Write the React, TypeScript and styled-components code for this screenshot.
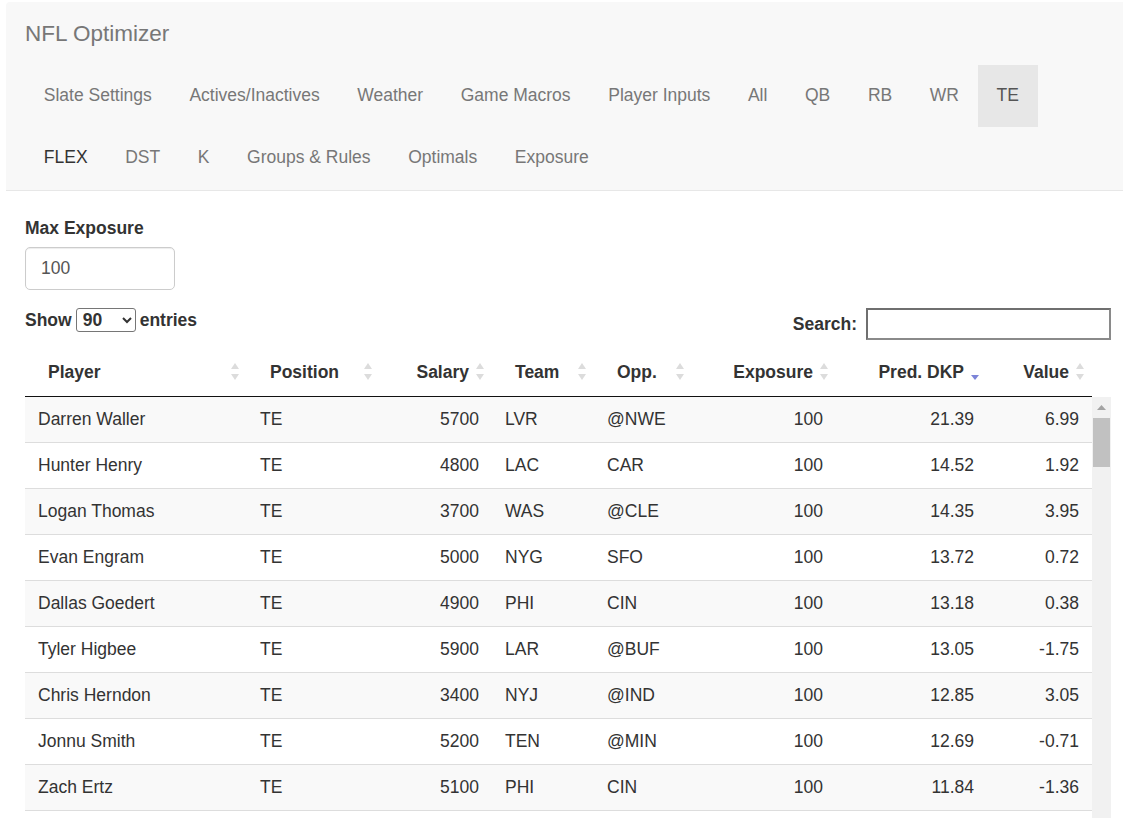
import React from "react";
import styled, { createGlobalStyle } from "styled-components";

const GlobalStyle = createGlobalStyle`
  html, body {
    margin: 0;
    padding: 0;
    overflow: hidden;
    background: #fff;
  }
  body {
    font-family: "Liberation Sans", Arial, Helvetica, sans-serif;
    font-size: 17.5px;
    line-height: 25px;
    color: #333;
  }
  * {
    box-sizing: border-box;
  }
`;

interface Row {
  player: string;
  pos: string;
  salary: number;
  team: string;
  opp: string;
  exposure: number;
  dkp: string;
  value: string;
}

const rows: Row[] = [
  { player: "Darren Waller", pos: "TE", salary: 5700, team: "LVR", opp: "@NWE", exposure: 100, dkp: "21.39", value: "6.99" },
  { player: "Hunter Henry", pos: "TE", salary: 4800, team: "LAC", opp: "CAR", exposure: 100, dkp: "14.52", value: "1.92" },
  { player: "Logan Thomas", pos: "TE", salary: 3700, team: "WAS", opp: "@CLE", exposure: 100, dkp: "14.35", value: "3.95" },
  { player: "Evan Engram", pos: "TE", salary: 5000, team: "NYG", opp: "SFO", exposure: 100, dkp: "13.72", value: "0.72" },
  { player: "Dallas Goedert", pos: "TE", salary: 4900, team: "PHI", opp: "CIN", exposure: 100, dkp: "13.18", value: "0.38" },
  { player: "Tyler Higbee", pos: "TE", salary: 5900, team: "LAR", opp: "@BUF", exposure: 100, dkp: "13.05", value: "-1.75" },
  { player: "Chris Herndon", pos: "TE", salary: 3400, team: "NYJ", opp: "@IND", exposure: 100, dkp: "12.85", value: "3.05" },
  { player: "Jonnu Smith", pos: "TE", salary: 5200, team: "TEN", opp: "@MIN", exposure: 100, dkp: "12.69", value: "-0.71" },
  { player: "Zach Ertz", pos: "TE", salary: 5100, team: "PHI", opp: "CIN", exposure: 100, dkp: "11.84", value: "-1.36" },
];

type Align = "left" | "right";
type Sort = "both" | "desc";

const columns: { label: string; width: number; align: Align; sort: Sort }[] = [
  { label: "Player", width: 222, align: "left", sort: "both" },
  { label: "Position", width: 133, align: "left", sort: "both" },
  { label: "Salary", width: 112, align: "right", sort: "both" },
  { label: "Team", width: 102, align: "left", sort: "both" },
  { label: "Opp.", width: 98, align: "left", sort: "both" },
  { label: "Exposure", width: 144, align: "right", sort: "both" },
  { label: "Pred. DKP", width: 151, align: "right", sort: "desc" },
  { label: "Value", width: 105, align: "right", sort: "both" },
];

const navTop = [
  "Slate Settings",
  "Actives/Inactives",
  "Weather",
  "Game Macros",
  "Player Inputs",
  "All",
  "QB",
  "RB",
  "WR",
  "TE",
];
const navBottom = ["FLEX", "DST", "K", "Groups & Rules", "Optimals", "Exposure"];

const SortIcon: React.FC<{ sort: Sort }> = ({ sort }) =>
  sort === "desc" ? (
    <svg width="10" height="19" viewBox="0 0 10 19">
      <path d="M1 13 L9 13 L5 18 Z" fill="#7c84d8" />
    </svg>
  ) : (
    <svg width="10" height="19" viewBox="0 0 10 19">
      <path d="M5 1 L9 7 L1 7 Z" fill="#dcdcdc" />
      <path d="M1 12 L9 12 L5 18 Z" fill="#dcdcdc" />
    </svg>
  );

const App: React.FC = () => {
  return (
    <>
      <GlobalStyle />
      <Navbar>
        <Brand>NFL Optimizer</Brand>
        <NavRow>
          {navTop.map((item) => (
            <NavItem key={item} $active={item === "TE"}>
              {item}
            </NavItem>
          ))}
        </NavRow>
        <NavRow>
          {navBottom.map((item) => (
            <NavItem key={item} $dark={item === "FLEX"}>
              {item}
            </NavItem>
          ))}
        </NavRow>
      </Navbar>

      <Content>
        <Label>Max Exposure</Label>
        <NumberInput defaultValue="100" />

        <Controls>
          <LengthControl>
            Show
            <LengthSelect defaultValue="90">
              <option value="10">10</option>
              <option value="25">25</option>
              <option value="50">50</option>
              <option value="90">90</option>
            </LengthSelect>
            entries
          </LengthControl>
          <SearchControl>
            Search:
            <SearchInput type="search" />
          </SearchControl>
        </Controls>

        <HeadTable>
          <colgroup>
            {columns.map((c) => (
              <col key={c.label} style={{ width: c.width }} />
            ))}
          </colgroup>
          <thead>
            <tr>
              {columns.map((c) => (
                <HeadCell key={c.label} $align={c.align}>
                  {c.label}
                  <SortSlot>
                    <SortIcon sort={c.sort} />
                  </SortSlot>
                </HeadCell>
              ))}
            </tr>
          </thead>
        </HeadTable>

        <ScrollArea>
          <BodyClip>
            <BodyTable>
              <colgroup>
                {columns.map((c) => (
                  <col key={c.label} style={{ width: c.width }} />
                ))}
              </colgroup>
              <tbody>
                {rows.map((r, i) => (
                  <BodyRow key={r.player} $odd={i % 2 === 0}>
                    <Cell>{r.player}</Cell>
                    <Cell>{r.pos}</Cell>
                    <Cell $align="right">{r.salary}</Cell>
                    <Cell>{r.team}</Cell>
                    <Cell>{r.opp}</Cell>
                    <Cell $align="right">{r.exposure}</Cell>
                    <Cell $align="right">{r.dkp}</Cell>
                    <Cell $align="right">{r.value}</Cell>
                  </BodyRow>
                ))}
              </tbody>
            </BodyTable>
          </BodyClip>
          <ScrollTrack>
            <ScrollArrow>
              <svg width="9" height="5" viewBox="0 0 9 5">
                <path d="M0 5 L4.5 0 L9 5 Z" fill="#a3a3a3" />
              </svg>
            </ScrollArrow>
            <ScrollThumb />
          </ScrollTrack>
        </ScrollArea>
      </Content>
    </>
  );
};

const Navbar = styled.nav`
  margin: 2px 0 0 6px;
  background-color: #f8f8f8;
  border-bottom: 1px solid #e7e7e7;
  border-radius: 4px 0 0 0;
  padding-bottom: 1px;
`;

const Brand = styled.div`
  height: 63px;
  display: flex;
  align-items: center;
  padding: 0 19px;
  font-size: 22.5px;
  color: #777;
`;

const NavRow = styled.ul`
  display: flex;
  margin: 0;
  padding: 0 19px;
  list-style: none;
`;

const NavItem = styled.li<{ $active?: boolean; $dark?: boolean }>`
  padding: 20px 18.8px;
  line-height: 21px;
  height: 62px;
  color: ${(p) => (p.$active ? "#555" : p.$dark ? "#333" : "#777")};
  background-color: ${(p) => (p.$active ? "#e7e7e7" : "transparent")};
  cursor: pointer;
`;

const Content = styled.div`
  padding: 25px 12px 0 25px;
`;

const Label = styled.label`
  display: block;
  font-weight: bold;
  margin-bottom: 6px;
`;

const NumberInput = styled.input`
  display: block;
  width: 150px;
  height: 43px;
  padding: 7px 15px;
  font-family: inherit;
  font-size: 17.5px;
  color: #555;
  border: 1px solid #ccc;
  border-radius: 5px;
  box-shadow: inset 0 1px 1px rgba(0, 0, 0, 0.075);
  outline: none;
`;

const Controls = styled.div`
  display: flex;
  justify-content: space-between;
  align-items: flex-start;
  margin-top: 18px;
  height: 38px;
`;

const LengthControl = styled.label`
  display: flex;
  align-items: center;
  gap: 4px;
  font-weight: bold;
  height: 24px;
`;

const LengthSelect = styled.select`
  height: 24px;
  width: 60px;
  padding: 0 2px;
  font-family: inherit;
  font-size: 17.5px;
  font-weight: bold;
  color: #333;
  border: 1px solid #767676;
  border-radius: 3px;
  background: #fff;
`;

const SearchControl = styled.label`
  display: flex;
  align-items: center;
  gap: 9px;
  font-weight: bold;
  height: 32px;
`;

const SearchInput = styled.input`
  width: 245px;
  height: 32px;
  border: 2px solid #6f6f6f;
  border-right-color: #8a8a8a;
  border-bottom-color: #8a8a8a;
  padding: 2px 4px;
  font-family: inherit;
  font-size: 17.5px;
  outline: none;
`;

const HeadTable = styled.table`
  width: 1067px;
  table-layout: fixed;
  border-collapse: collapse;
`;

const HeadCell = styled.th<{ $align: Align }>`
  position: relative;
  padding: 13.5px 23px 11.5px;
  line-height: 25px;
  font-weight: bold;
  color: #333;
  text-align: ${(p) => p.$align};
  border-bottom: 1px solid #111;
  white-space: nowrap;
`;

const SortSlot = styled.span`
  position: absolute;
  right: 7px;
  top: 16px;
  display: flex;
`;

const ScrollArea = styled.div`
  display: flex;
  width: 1086px;
  height: 421px;
`;

const BodyClip = styled.div`
  width: 1067px;
  overflow: hidden;
`;

const BodyTable = styled.table`
  width: 1067px;
  table-layout: fixed;
  border-collapse: collapse;
`;

const BodyRow = styled.tr<{ $odd: boolean }>`
  background-color: ${(p) => (p.$odd ? "#f9f9f9" : "#fff")};
`;

const Cell = styled.td<{ $align?: Align }>`
  padding: 10px 13px 10px;
  line-height: 25px;
  text-align: ${(p) => p.$align || "left"};
  border-bottom: 1px solid #ddd;
  white-space: nowrap;
`;

const ScrollTrack = styled.div`
  width: 19px;
  background-color: #f1f1f1;
  display: flex;
  flex-direction: column;
  align-items: center;
`;

const ScrollArrow = styled.div`
  height: 21px;
  display: flex;
  align-items: center;
  justify-content: center;
`;

const ScrollThumb = styled.div`
  width: 17px;
  height: 49px;
  background-color: #c1c1c1;
`;

export default App;
